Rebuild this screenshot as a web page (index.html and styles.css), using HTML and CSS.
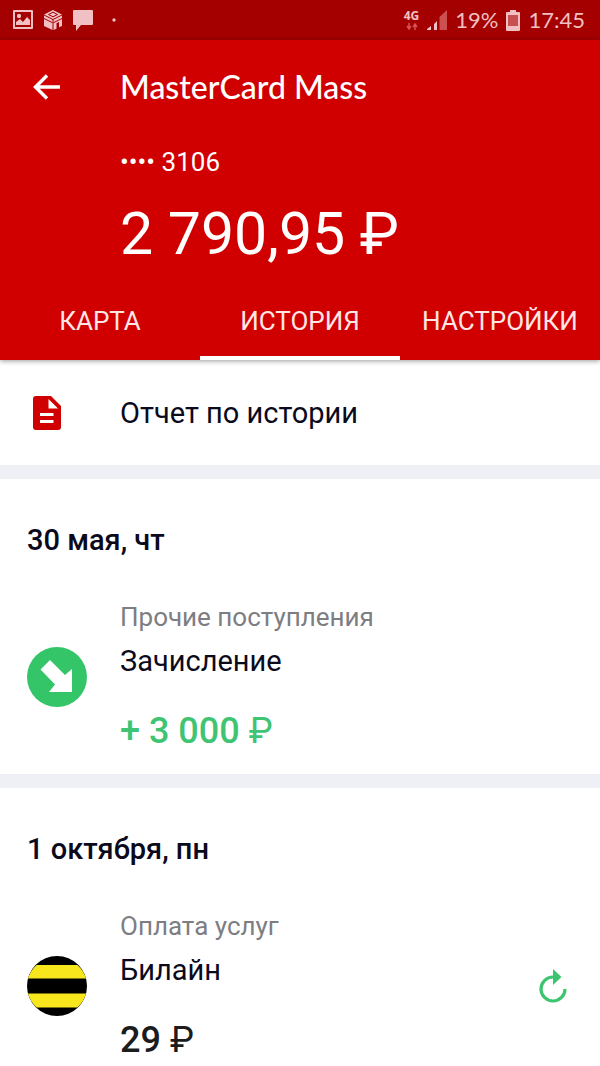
FILE: index.html
```html
<!DOCTYPE html>
<html lang="ru">
<head>
<meta charset="utf-8">
<meta name="viewport" content="width=device-width, initial-scale=1">
<title>MasterCard Mass</title>
<link rel="stylesheet" href="styles.css">
</head>
<body>
<div class="status">
  <div class="status-left">
    <svg width="20" height="20" viewBox="0 0 20 20"><path fill="currentColor" fill-rule="evenodd" d="M1 0h18a1 1 0 0 1 1 1v17a1 1 0 0 1-1 1H1a1 1 0 0 1-1-1V1a1 1 0 0 1 1-1zM2 2v15h16V2zM3 15v-3l4-3 3 3 4-5 3 3v5zM5 4h2l1 1v2l-1 1H5L4 7V5z"/></svg>
    <svg width="18" height="20" viewBox="0 0 18 20"><path fill="currentColor" d="M9 0l9 4.500-9 4.500-9-4.500zM0 5.500l8.500 4.200V20L0 16zM18 5.500V16l-3 1.300V12l-2.500 1.200v5.500L9.500 20V9.700z"/><path d="M4.500 4.500L9 2.200l4.500 2.300L9 6.800zM0 8.500l8.500 4.200M9.500 12.700L18 8.500" fill="none" stroke="#a40000"/></svg>
    <svg width="20" height="21" viewBox="0 0 20 21"><path fill="currentColor" d="M1 0h18q1 0 1 1v13q0 1-1 1H8l-5 6v-6H1q-1 0-1-1V1q0-1 1-1z"/></svg>
    <svg class="dot" width="4" height="4" viewBox="0 0 4 4"><circle cx="2" cy="2" r="1.700" fill="currentColor"/></svg>
  </div>
  <div class="status-right">
    <div class="network"><span>4G</span>
      <svg width="12" height="7" viewBox="0 0 12 7"><path d="M3 0v5M1 3l2 3 2-3M9 7V2M7 4l2-3 2 3" fill="none" stroke="#d45454" stroke-width="1.500"/></svg>
    </div>
    <svg width="20" height="20" viewBox="0 0 20 20"><path fill="currentColor" d="M0 20v-1l4-3v4zM7 20v-6l3-3v9z"/><path fill="#cc5050" d="M12.500 20V7L20 0v20z"/></svg>
    <span class="status-text">19%</span>
    <svg width="14" height="21" viewBox="0 0 14 21"><path fill="currentColor" d="M4 0h6v2h3q1 0 1 1v17q0 1-1 1H1q-1 0-1-1V3q0-1 1-1h3z"/><path fill="#c95050" d="M2 5h10v11H2z"/></svg>
    <span class="status-text">17:45</span>
  </div>
</div>
<header class="header">
  <div class="title-row">
    <button class="back" aria-label="Назад"><svg width="27" height="26" viewBox="0 0 27 26"><path d="M27 13H3M14 1.500L2.500 13 14 24.500" fill="none" stroke="currentColor" stroke-width="3.400"/></svg></button>
    <h1 class="title">MasterCard Mass</h1>
  </div>
  <p class="card-number">•••• 3106</p>
  <p class="balance">2 790,95 ₽</p>
  <nav class="tabs">
    <button class="tab">КАРТА</button>
    <button class="tab tab-active" aria-current="page">ИСТОРИЯ</button>
    <button class="tab">НАСТРОЙКИ</button>
  </nav>
</header>
<main>
  <button class="report">
    <svg width="28" height="34" viewBox="0 0 28 34"><path fill="#d00000" fill-rule="evenodd" d="M3 0h15l10 10v21a3 3 0 0 1-3 3H3a3 3 0 0 1-3-3V3a3 3 0 0 1 3-3zM15.500 3v9.500H25zM7 17v3h13.500v-3zM7 24v3h13.500v-3z"/></svg>
    <span>Отчет по истории</span>
  </button>
  <section class="day">
    <h2 class="date">30 мая, чт</h2>
    <article class="operation">
      <svg width="60" height="60" viewBox="0 0 60 60"><circle cx="30" cy="30" r="30" fill="#33c568"/><path fill="#fff" d="M23 13L13.500 22.500 28 37.500 22 45H45V22L38 28z"/></svg>
      <div class="details">
        <p class="category">Прочие поступления</p>
        <h3 class="name">Зачисление</h3>
        <p class="amount amount-in">+ 3 000 <span class="currency">₽</span></p>
      </div>
    </article>
  </section>
  <section class="day">
    <h2 class="date">1 октября, пн</h2>
    <article class="operation">
      <svg width="60" height="60" viewBox="0 0 60 60"><circle cx="30" cy="30" r="30"/><path fill="#f8e71c" d="M9.600 9H50.400A30 30 0 0 1 59 22.500H1A30 30 0 0 1 9.600 9zM1 37.500H59A30 30 0 0 1 50.400 51.500H9.600A30 30 0 0 1 1 37.500z"/></svg>
      <div class="details">
        <p class="category">Оплата услуг</p>
        <h3 class="name">Билайн</h3>
        <p class="amount">29 <span class="currency">₽</span></p>
      </div>
      <button class="repeat" aria-label="Повторить"><svg width="28" height="34" viewBox="0 0 28 34"><path d="M26 20A12 12 0 1 1 14 8" fill="none" stroke="currentColor" stroke-width="3.200"/><path fill="currentColor" d="M14 0l8.500 8-8.500 8z"/></svg></button>
    </article>
  </section>
</main>
</body>
</html>
```
FILE: styles.css
```css
* {
  box-sizing: border-box;
}

body {
  margin: 0;
  background: #fff;
  color: #0b0a1c;
  font-family: Roboto, sans-serif;
}

h1, h2, h3, p {
  margin: 0;
}

button {
  padding: 0;
  border: 0;
  background: none;
  color: inherit;
  font: inherit;
}

svg {
  display: block;
  flex: none;
}

.status {
  display: flex;
  justify-content: space-between;
  height: 40px;
  padding: 0 15px 0 13px;
  background: #a40000;
  color: #f0c0c4;
}

.status-left,
.status-right {
  display: flex;
  align-items: center;
}

.status-left {
  gap: 11px;
}

.dot {
  margin-left: 8px;
}

.status-right {
  gap: 8px;
}

.network {
  display: grid;
  justify-items: center;
  gap: 2px;
  font: bold 12px/10px "Open Sans", sans-serif;
}

.status-text {
  font: 22px/40px Lato, sans-serif;
}

.header {
  position: relative;
  background: #d00000;
  color: #fff;
  box-shadow: 0 1px 5px rgba(0, 0, 0, 0.4);
}

.title-row {
  display: flex;
  align-items: center;
  height: 94px;
}

.back {
  width: 120px;
  padding-left: 33px;
}

.title {
  font: 500 32px/40px Lato, sans-serif;
}

.card-number {
  padding-left: 120px;
  font-size: 26px;
  line-height: 56px;
}

.balance {
  padding-left: 120px;
  font-size: 59px;
  line-height: 88px;
}

.tabs {
  display: grid;
  grid-template-columns: repeat(3, 1fr);
}

.tab {
  height: 82px;
  padding-top: 4px;
  border-top: 4px solid transparent;
  border-bottom: 4px solid transparent;
  color: #ffe6e6;
  font-size: 26px;
}

.tab-active {
  border-bottom-color: #fff;
}

.report {
  display: flex;
  align-items: center;
  gap: 59px;
  width: 100%;
  height: 105px;
  padding-left: 33px;
  font-size: 29px;
}

.day {
  padding: 44px 27px 21px;
  border-top: 14px solid #eef0f6;
}

.day:last-child {
  padding-bottom: 4px;
}

.date {
  margin-bottom: 44px;
  font-size: 29px;
  font-weight: 500;
  line-height: 34px;
}

.operation {
  display: flex;
  align-items: center;
}

.details {
  flex: 1;
  padding-left: 33px;
}

.category {
  color: #7d7d82;
  font-size: 26px;
  line-height: 32px;
}

.name {
  margin: 11px 0 31px;
  font-size: 29px;
  font-weight: 400;
  line-height: 34px;
}

.amount {
  color: #1c1c1c;
  font-size: 36px;
  font-weight: 500;
  line-height: 44px;
}

.amount-in {
  color: #3fc474;
}

.currency {
  font-weight: 400;
}

.repeat {
  margin-right: 6px;
  color: #3cc46e;
}
```
